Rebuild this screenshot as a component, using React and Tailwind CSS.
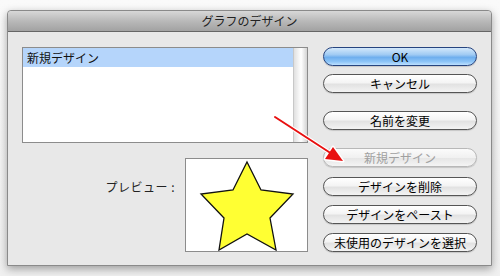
import React from "react";

const font = { fontFamily: '"Noto Sans CJK JP", "Noto Sans", sans-serif' };

function Btn({ children, primary, disabled, className = "" }) {
  const base =
    "h-[19px] w-full rounded-full border flex items-center justify-center text-[12px] leading-none shadow-[0_1px_1px_rgba(0,0,0,0.15)]";
  let look;
  if (primary) {
    look =
      "border-[#26447f] text-black bg-[linear-gradient(to_bottom,#d3e8fb_0%,#9fcaf3_40%,#6eaeee_55%,#8cc4f7_80%,#bde0ff_100%)]";
  } else if (disabled) {
    look =
      "border-[#b8b8b8] text-[#a0a0a0] bg-[linear-gradient(to_bottom,#fbfbfb_0%,#f1f1f1_50%,#e6e6e6_55%,#f4f4f4_100%)]";
  } else {
    look =
      "border-[#555] text-black bg-[linear-gradient(to_bottom,#ffffff_0%,#f4f4f4_45%,#e2e2e2_55%,#f3f3f3_100%)]";
  }
  return <div className={`${base} ${look} ${className}`}>{children}</div>;
}

export default function App() {
  return (
    <div
      className="relative w-[500px] h-[276px] bg-[linear-gradient(to_bottom,#fafafa,#f0f0f0)] overflow-hidden"
      style={font}
    >
      <div className="pt-[10px] pl-[7px]">
        <div className="w-[485px] h-[256px] bg-[#e8e8e8] rounded-t-[4px] border border-[#8a8a8a] shadow-[0_3px_8px_rgba(0,0,0,0.35)] flex flex-col">
          <div className="h-[21px] shrink-0 rounded-t-[4px] border-b border-[#666] bg-[linear-gradient(to_bottom,#d8d8d8,#b9b9b9_50%,#a2a2a2)] flex items-center justify-center text-[12px] text-[#222] leading-none">
            グラフのデザイン
          </div>
          <div className="flex pl-[14px] pt-[15px] gap-[15px]">
            <div className="w-[286px] flex flex-col">
              <div className="h-[96px] border border-[#8c8c8c] bg-white flex">
                <div className="flex-1">
                  <div className="h-[19px] bg-[#b5d5fb] text-[12px] text-[#111] flex items-center pl-[4px] leading-none">
                    新規デザイン
                  </div>
                </div>
                <div className="w-[14px] border-l border-[#c8c8c8] bg-[linear-gradient(to_right,#e0e0e0,#fafafa_45%,#ffffff_55%,#d4d4d4)]"></div>
              </div>
              <div className="flex justify-end items-start mt-[15px] gap-[10px]">
                <div className="mt-[23px] text-[12px] text-[#222] leading-none tracking-[0.5px]">
                  プレビュー :
                </div>
                <div className="w-[123px] h-[94px] border border-[#8c8c8c] bg-white">
                  <svg width="121" height="92" viewBox="0 0 121 92">
                    <polygon
                      points="61,3 75,31 107,35 84,59 90,91 61,75 33,91 38,59 15,35 47,31"
                      fill="#ffff33"
                      stroke="#111"
                      strokeWidth="1.3"
                      strokeLinejoin="miter"
                    />
                  </svg>
                </div>
              </div>
            </div>
            <div className="w-[154px] flex flex-col">
              <Btn primary>OK</Btn>
              <Btn className="mt-[8px]">キャンセル</Btn>
              <Btn className="mt-[18px]">名前を変更</Btn>
              <Btn disabled className="mt-[18px]">新規デザイン</Btn>
              <Btn className="mt-[10px]">デザインを削除</Btn>
              <Btn className="mt-[9px]">デザインをペースト</Btn>
              <Btn className="mt-[9px]">未使用のデザインを選択</Btn>
            </div>
          </div>
        </div>
      </div>
      <svg
        className="absolute left-0 top-0 pointer-events-none"
        width="500"
        height="276"
        viewBox="0 0 500 276"
      >
        <line x1="275" y1="117" x2="332" y2="154" stroke="#fff" strokeWidth="4" strokeLinecap="round" />
        <polygon points="343,161 325,159 333,147" fill="#fff" stroke="#fff" strokeWidth="3" strokeLinejoin="round" />
        <line x1="275" y1="117" x2="332" y2="154" stroke="#e81010" strokeWidth="2" strokeLinecap="round" />
        <polygon points="343,161 325,159 333,147" fill="#e81010" />
      </svg>
    </div>
  );
}
